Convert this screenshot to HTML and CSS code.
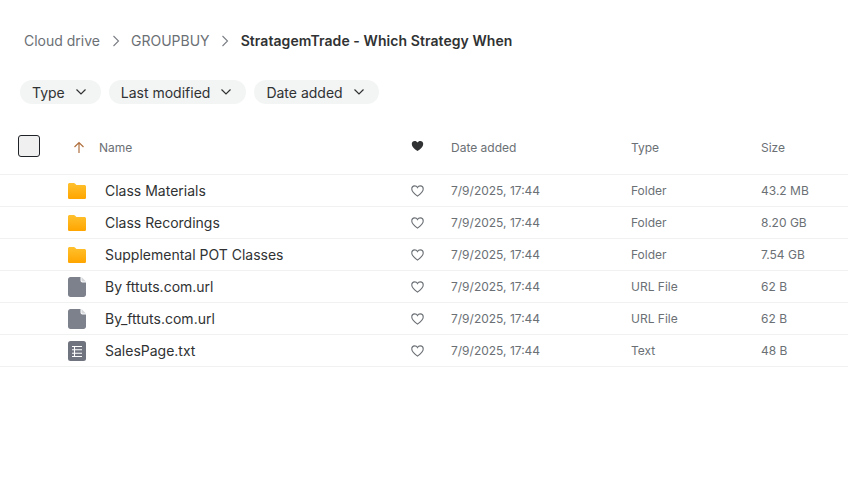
FILE: index.html
```html
<!DOCTYPE html>
<html lang="en">
<head>
<meta charset="utf-8">
<title>Cloud drive</title>
<link rel="stylesheet" href="styles.css">
<svg class="defs" width="0" height="0" aria-hidden="true">
  <defs>
    <linearGradient id="fg" x1="0" y1="0" x2="0" y2="1">
      <stop offset="0" stop-color="#ffc12e"/><stop offset="1" stop-color="#ffa500"/>
    </linearGradient>
    <symbol id="folder" viewBox="0 0 18 16">
      <path fill="url(#fg)" d="M0 1.600C0 .7.700 0 1.600 0h4.200c.5 0 .9.200 1.200.5L8.400 2h8c.9 0 1.600.7 1.600 1.600v10.800c0 .9-.7 1.600-1.600 1.600H1.600C.7 16 0 15.300 0 14.400z"/>
    </symbol>
    <symbol id="file" viewBox="0 0 18 20">
      <path fill="#7d818b" d="M2.500 0h10v3.500c0 1.100.9 2 2 2H18V17.500c0 1.400-1.100 2.500-2.500 2.500h-13C1.100 20 0 18.900 0 17.500v-15C0 1.100 1.100 0 2.500 0z"/>
      <path fill="#d5d7da" d="M13.500 0L18 4.500h-3.500c-.6 0-1-.4-1-1z"/>
    </symbol>
    <symbol id="text" viewBox="0 0 18 20">
      <rect width="18" height="20" rx="2.500" fill="#70747f"/>
      <path stroke="#fff" stroke-width="1.100" fill="none" d="M4 5.500h10M4 8.800h10M4 12.200h10M4 15.500h10M6.500 5v11"/>
    </symbol>
    <symbol id="heart" viewBox="0 0 14 13">
      <path d="M7 12C3.500 9.500.8 7.300.8 4.300.8 2.400 2.200 1 4 1c1.300 0 2.400.7 3 1.800C7.600 1.700 8.700 1 10 1c1.800 0 3.200 1.400 3.200 3.300C13.200 7.300 10.500 9.500 7 12z"/>
    </symbol>
    <symbol id="chev" viewBox="0 0 12 8">
      <path d="M1.500 1.500L6 6l4.500-4.500" fill="none" stroke="#303233" stroke-width="1.200"/>
    </symbol>
  </defs>
</svg>
</head>
<body>
<main class="page">
  <nav class="crumbs">
    <span class="crumb">Cloud drive</span>
    <svg class="sep" viewBox="0 0 8 12"><path d="M1.500 1L6.500 6l-5 5" fill="none" stroke="#7a7f85" stroke-width="1.100"/></svg>
    <span class="crumb">GROUPBUY</span>
    <svg class="sep" viewBox="0 0 8 12"><path d="M1.500 1L6.500 6l-5 5" fill="none" stroke="#7a7f85" stroke-width="1.100"/></svg>
    <span class="crumb current">StratagemTrade - Which Strategy When</span>
  </nav>

  <div class="chips">
    <button class="chip">Type <svg class="chev"><use href="#chev"/></svg></button>
    <button class="chip">Last modified <svg class="chev"><use href="#chev"/></svg></button>
    <button class="chip">Date added <svg class="chev"><use href="#chev"/></svg></button>
  </div>

  <div class="row head">
    <span class="c-check"><span class="checkbox"></span></span>
    <span class="c-sort"><svg class="arrow" viewBox="0 0 12 13"><path d="M6 12V1.500M1.500 6L6 1.500 10.500 6" fill="none" stroke="#b0703f" stroke-width="1.200"/></svg></span>
    <span class="c-name">Name</span>
    <span class="c-fav"><svg class="heart solid"><use href="#heart"/></svg></span>
    <span class="c-date">Date added</span>
    <span class="c-type">Type</span>
    <span class="c-size">Size</span>
  </div>

  <div class="row item">
    <span class="c-icon"><svg class="ic-folder"><use href="#folder"/></svg></span>
    <span class="c-title">Class Materials</span>
    <span class="c-fav"><svg class="heart line"><use href="#heart"/></svg></span>
    <span class="c-date">7/9/2025, 17:44</span><span class="c-type">Folder</span><span class="c-size">43.2 MB</span>
  </div>
  <div class="row item">
    <span class="c-icon"><svg class="ic-folder"><use href="#folder"/></svg></span>
    <span class="c-title">Class Recordings</span>
    <span class="c-fav"><svg class="heart line"><use href="#heart"/></svg></span>
    <span class="c-date">7/9/2025, 17:44</span><span class="c-type">Folder</span><span class="c-size">8.20 GB</span>
  </div>
  <div class="row item">
    <span class="c-icon"><svg class="ic-folder"><use href="#folder"/></svg></span>
    <span class="c-title">Supplemental POT Classes</span>
    <span class="c-fav"><svg class="heart line"><use href="#heart"/></svg></span>
    <span class="c-date">7/9/2025, 17:44</span><span class="c-type">Folder</span><span class="c-size">7.54 GB</span>
  </div>
  <div class="row item">
    <span class="c-icon"><svg class="ic-file"><use href="#file"/></svg></span>
    <span class="c-title">By fttuts.com.url</span>
    <span class="c-fav"><svg class="heart line"><use href="#heart"/></svg></span>
    <span class="c-date">7/9/2025, 17:44</span><span class="c-type">URL File</span><span class="c-size">62 B</span>
  </div>
  <div class="row item">
    <span class="c-icon"><svg class="ic-file"><use href="#file"/></svg></span>
    <span class="c-title">By_fttuts.com.url</span>
    <span class="c-fav"><svg class="heart line"><use href="#heart"/></svg></span>
    <span class="c-date">7/9/2025, 17:44</span><span class="c-type">URL File</span><span class="c-size">62 B</span>
  </div>
  <div class="row item">
    <span class="c-icon"><svg class="ic-file"><use href="#text"/></svg></span>
    <span class="c-title">SalesPage.txt</span>
    <span class="c-fav"><svg class="heart line"><use href="#heart"/></svg></span>
    <span class="c-date">7/9/2025, 17:44</span><span class="c-type">Text</span><span class="c-size">48 B</span>
  </div>
</main>
</body>
</html>
```
FILE: styles.css
```css
* { box-sizing: border-box; }
html, body { margin: 0; background: #fff; }
body { font-family: Inter, "Liberation Sans", sans-serif; color: #303233; overflow: hidden; }
.defs { display: block; width: 0; height: 0; position: absolute; }
.page { width: 848px; height: 497px; padding-top: 31px; }

.crumbs { display: flex; align-items: center; height: 20px; padding-left: 24px; font-size: 14px; line-height: 20px; color: #6b7075; }
.crumb { white-space: nowrap; }
.sep { width: 8px; height: 12px; margin: 0 11.500px; }
.current { font-weight: 600; font-size: 14px; letter-spacing: 0.070px; color: #303233; }

.chips { display: flex; gap: 8px; margin-top: 29px; padding-left: 20px; }
.chip { display: flex; align-items: center; gap: 10px; height: 24px; padding: 1px 14px 0 12px; border: 0; border-radius: 12px; background: #f3f4f4; font: 400 14px/20px Inter, sans-serif; color: #303233; }
.chev { width: 12px; height: 8px; margin-top: -2px; }

.row { display: flex; align-items: center; white-space: nowrap; }
.head { height: 71px; padding-top: 16px; font-size: 12px; color: #6b7075; border-bottom: 1px solid #f0f1f1; }
.item { height: 32px; border-bottom: 1px solid #f0f1f1; font-size: 12px; color: #6b7075; }

.c-check { width: 73px; padding-left: 18px; display: flex; margin-bottom: 2px; }
.checkbox { width: 22px; height: 22px; border: 1px solid #1f2328; border-radius: 3px; background: #f0f0f0; }
.c-sort { width: 26px; display: flex; }
.arrow { width: 12px; height: 13px; }
.c-name { width: 311px; }

.c-icon { width: 105px; padding-left: 68px; display: flex; }
.ic-folder { width: 18px; height: 16px; }
.ic-file { width: 18px; height: 20px; }
.c-title { width: 305px; font-size: 14px; color: #303233; }

.c-fav { width: 41px; display: flex; padding-left: 0.500px; }
.heart { width: 13px; height: 12px; }
.solid { fill: #303233; margin-bottom: 2px; }
.line { fill: none; stroke: #6b7075; stroke-width: 1.200; }
.c-date { width: 180px; }
.c-type { width: 130px; }
.c-size { flex: 1; }
```
